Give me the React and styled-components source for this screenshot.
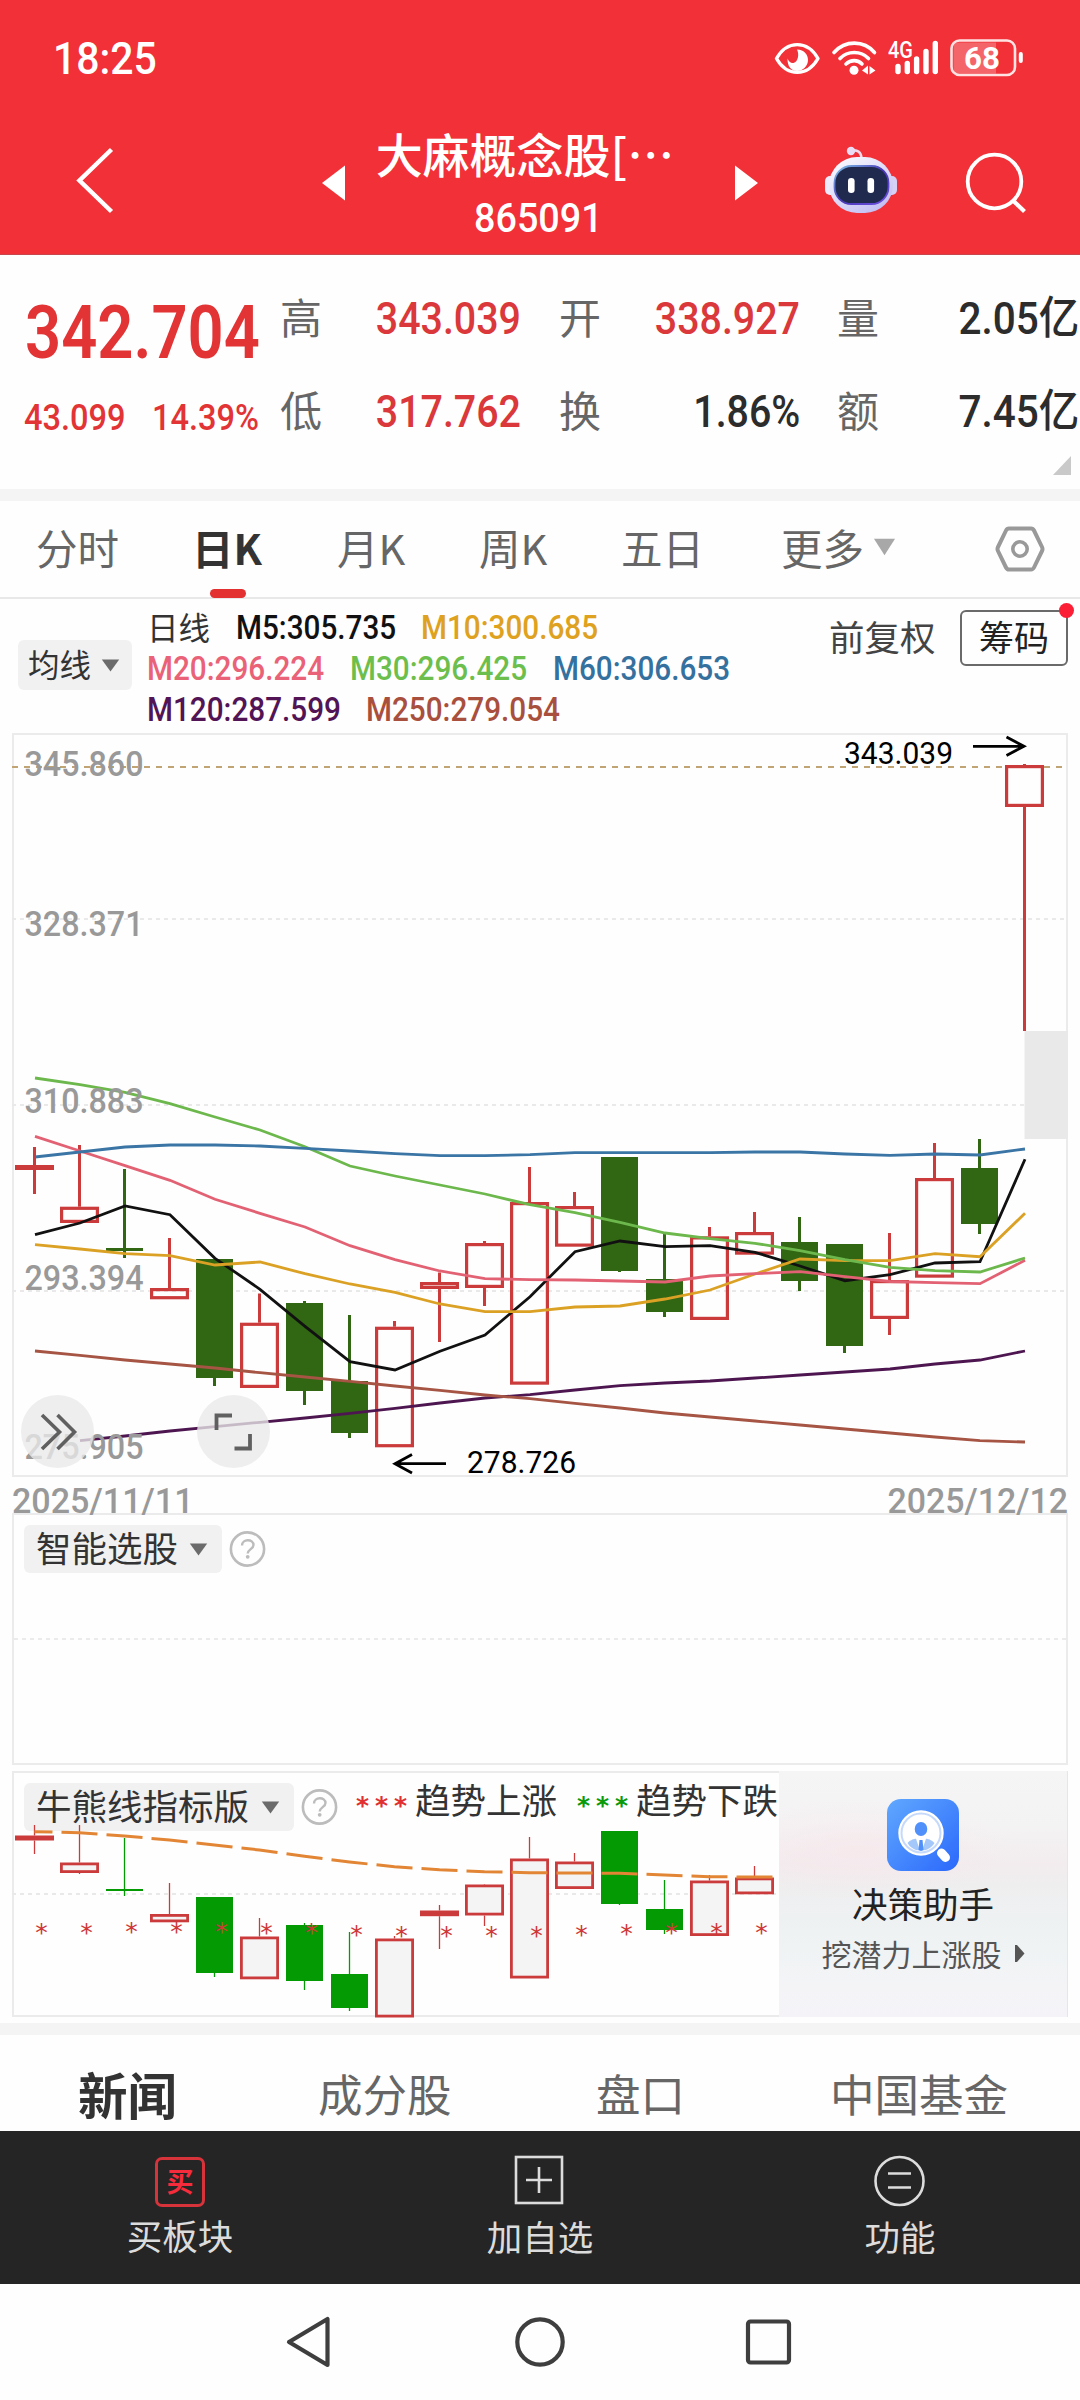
import React from "react";
import styled, { createGlobalStyle } from "styled-components";

const GlobalStyle = createGlobalStyle`
	* {
		box-sizing: border-box;
	}
	body {
		margin: 0;
		background: #fefefe;
		font-family: "Noto Sans CJK SC", sans-serif;
	}
	svg {
		display: block;
		flex: none;
		overflow: visible;
	}
`;

const Page = styled.div`
	width: 1080px;
	height: 2400px;
	display: flex;
	flex-direction: column;
	overflow: hidden;
	background: #fefefe;
`;

/* fixed width box, the digits inside are squeezed a little */
const NumBox = styled.span`
	display: inline-flex;
	justify-content: ${(p) => (p.$end ? "flex-end" : "flex-start")};
	flex: none;
	width: ${(p) => p.$w}px;
	font-family: Roboto, "Noto Sans CJK SC", sans-serif;
	font-size: ${(p) => p.$size}px;
	font-weight: ${(p) => p.$weight || 500};
	line-height: 1;
	color: ${(p) => p.$color || "inherit"};
	white-space: nowrap;
`;
const NumText = styled.span`
	transform: scaleX(${(p) => p.$k});
	transform-origin: ${(p) => (p.$end ? "right" : "left")} center;
`;

function Num({ w, size, k = 0.9, color, weight, end, children }) {
	return (
		<NumBox $w={w} $size={size} $color={color} $weight={weight} $end={end}>
			<NumText $k={k} $end={end}>
				{children}
			</NumText>
		</NumBox>
	);
}

/* ---------- header ---------- */
const Header = styled.header`
	height: 255px;
	background: #f13037;
	color: white;
	border-bottom: 1px solid #c9474c;
`;
const StatusBar = styled.div`
	height: 112px;
	padding: 4px 56px 0 53px;
	display: flex;
	align-items: center;
	justify-content: space-between;
`;
const TitleBar = styled.div`
	height: 142px;
	display: grid;
	grid-template-columns: 322px 436px 322px;
`;
const TitleSide = styled.div`
	display: flex;
	align-items: flex-start;
	padding-left: ${(p) => p.$left}px;
`;
const TitleCenter = styled.div`
	display: flex;
	justify-content: space-between;
	align-items: flex-start;
`;
const TitleText = styled.div`
	display: flex;
	flex-direction: column;
	align-items: center;
	padding-top: 16px;
	padding-right: 3px;
`;
const StockName = styled.div`
	font-size: 47px;
	line-height: 50px;
	font-weight: 500;
	margin: 0 27px 20px 0;
	white-space: nowrap;
`;

/* ---------- quote ---------- */
const Quote = styled.section`
	height: 234px;
	position: relative;
	display: grid;
	grid-template-columns: 280px 279px 278px 243px;
`;
const PriceBlock = styled.div`
	padding: 41px 0 0 25px;
	color: #e23335;
`;
const ChangeRow = styled.div`
	display: flex;
	gap: 27px;
	margin: 29px 0 0 -1px;
`;
const QuoteCol = styled.div`
	display: flex;
	flex-direction: column;
	gap: 33px;
	padding-top: 33px;
`;
const QuoteCell = styled.div`
	height: 60px;
	display: flex;
	align-items: center;
	justify-content: space-between;
	padding-right: ${(p) => p.$right}px;
`;
const QuoteLabel = styled.span`
	font-size: 42px;
	line-height: 56px;
	padding-bottom: 5px;
	color: #666;
`;
const Corner = styled.svg`
	position: absolute;
	right: 9px;
	bottom: 14px;
`;
const Band = styled.div`
	height: 12px;
	flex: none;
	background: #f4f4f4;
`;

/* ---------- period tabs ---------- */
const Tabs = styled.nav`
	height: 98px;
	flex: none;
	position: relative;
	display: flex;
	border-bottom: 2px solid #e8e8e8;
	padding-left: 36px;
`;
const Tab = styled.div`
	width: ${(p) => p.$w}px;
	position: relative;
	font-size: 41.5px;
	line-height: 92px;
	padding-bottom: 4px;
	white-space: nowrap;
	color: ${(p) => (p.$active ? "#333" : "#666")};
	font-weight: ${(p) => (p.$active ? 700 : 400)};

	display: flex;
	align-items: center;
	gap: 9px;
`;
const Indicator = styled.span`
	position: absolute;
	left: 18px;
	bottom: -1px;
	width: 36px;
	height: 9px;
	border-radius: 5px;
	background: #e33030;
`;

/* ---------- legend ---------- */
const Legend = styled.div`
	height: 134px;
	flex: none;
	display: flex;
	align-items: flex-start;
	padding: 0 12px 0 18px;
`;
const Chip = styled.div`
	height: ${(p) => p.$h}px;
	width: ${(p) => p.$w}px;
	flex: none;
	display: flex;
	align-items: center;
	justify-content: space-between;
	padding: 0 ${(p) => p.$pr}px 0 ${(p) => p.$pl}px;
	margin-top: ${(p) => p.$top || 0}px;
	border-radius: 6px;
	background: #f1f1f1;
	color: #333;
	font-size: ${(p) => p.$size}px;
	line-height: ${(p) => p.$h}px;
	white-space: nowrap;
`;
const ChipText = styled.span`
	padding-bottom: 4px;
`;
const MaRows = styled.div`
	width: 697px;
	padding: 8px 0 0 15px;
	display: flex;
	flex-direction: column;
`;
const MaRow = styled.div`
	height: 41px;
	display: flex;
	align-items: center;
	gap: 27px;
`;
const LineName = styled.span`
	width: 62px;
	font-size: 31.5px;
	line-height: 41px;
	padding-bottom: 3px;
	color: #333;
	white-space: nowrap;
`;
const Adjust = styled.div`
	margin-top: 14px;
	width: 131px;
	font-size: 35.5px;
	line-height: 46px;
	color: #444;
	white-space: nowrap;
`;
const ChipsButton = styled.div`
	position: relative;
	width: 108px;
	height: 56px;
	margin-top: 11px;
	border: 2px solid #6a6a6a;
	border-radius: 6px;
	font-size: 35px;
	line-height: 48px;
	text-align: center;
	color: #222;
`;
const RedDot = styled.i`
	position: absolute;
	right: -8px;
	top: -9px;
	width: 15px;
	height: 15px;
	border-radius: 50%;
	background: #fc1e35;
`;

/* ---------- charts ---------- */
const ChartWrap = styled.div`
	position: relative;
	height: 744px;
	flex: none;
`;
const RoundButton = styled.div`
	position: absolute;
	left: ${(p) => p.$left}px;
	top: 662px;
	width: 73px;
	height: 73px;
	border-radius: 50%;
	background: rgba(233, 233, 233, 0.78);
`;
const Dates = styled.div`
	height: 36px;
	flex: none;
	padding: 7px 12px 0 12px;
	display: flex;
	justify-content: space-between;
	color: #999;
`;
const SmartPanel = styled.div`
	height: 252px;
	flex: none;
	margin: 0 12px 6px;
	border: 2px solid #ebebeb;
	display: flex;
	flex-direction: column;
`;
const PanelHead = styled.div`
	height: ${(p) => p.$h}px;
	display: flex;
	align-items: flex-start;
	padding: 10px 0 0 10px;
	gap: 7px;
`;
const MidLine = styled.div`
	height: 2px;
	background: repeating-linear-gradient(90deg, #ebebeb 0 4px, transparent 4px 8px);
`;
const BullPanel = styled.div`
	height: 246px;
	flex: none;
	margin: 0 12px 6px;
	display: flex;
`;
const BullChart = styled.div`
	width: 767px;
	position: relative;
`;
const BullHead = styled.div`
	position: relative;
	display: flex;
	align-items: flex-start;
	padding: 12px 0 0 12px;
	height: 246px;
`;
const HelpSlot = styled.div`
	flex: none;
	padding: 0 18px 0 7px;
`;
const BullSvg = styled.svg`
	position: absolute;
	left: -12px;
	top: 0;
	z-index: 1;
`;
const TrendText = styled.span`
	width: ${(p) => p.$w}px;
	flex: none;
	font-size: 35.5px;
	line-height: 32px;
	color: #333;
	white-space: nowrap;
`;
const Stars = styled.span`
	width: 59px;
	flex: none;
	font-family: "DejaVu Sans", sans-serif;
	font-weight: bold;
	font-size: 25px;
	letter-spacing: 5.9px;
	line-height: 46px;
	white-space: nowrap;
	color: ${(p) => p.$color};
`;
const Helper = styled.div`
	width: 289px;
	display: flex;
	flex-direction: column;
	align-items: center;
	padding-top: 28px;
	border-right: 1px solid #e6e6e6;
	background:
		radial-gradient(ellipse 150px 50px at 78px 78px, rgba(248, 230, 234, 0.6), transparent),
		linear-gradient(#f5f5f6 0%, #f4f3f4 22%, #f2ecee 38%, #efeeef 46%, #eef1f2 60%, #eff3f4 72%, #f4f4f7 88%, #f5f3f7 100%);
`;
const HelperTitle = styled.div`
	margin-top: 10px;
	font-size: 35.5px;
	line-height: 44px;
	color: #222;
`;
const HelperSub = styled.div`
	margin-top: 9px;
	display: flex;
	align-items: center;
	gap: 12px;
	font-size: 30px;
	line-height: 38px;
	color: #555;
`;

/* ---------- bottom ---------- */
const NewsTabs = styled.div`
	height: 96px;
	flex: none;
	display: flex;
	padding: 7px 0 0 78px;
`;
const NewsTab = styled.div`
	width: ${(p) => p.$w}px;
	font-size: ${(p) => (p.$active ? 49.5 : 44.5)}px;
	font-weight: ${(p) => (p.$active ? 700 : 400)};
	line-height: ${(p) => (p.$active ? 103 : 101)}px;
	color: ${(p) => (p.$active ? "#333" : "#666")};
	white-space: nowrap;
`;
const ActionBar = styled.div`
	height: 153px;
	flex: none;
	display: grid;
	grid-template-columns: repeat(3, 1fr);
	background: #252525;
`;
const Action = styled.div`
	display: flex;
	flex-direction: column;
	align-items: center;
	padding-top: 24px;
	color: #dcdcdc;
`;
const ActionLabel = styled.div`
	font-size: 35.5px;
	line-height: 44px;
	margin-top: ${(p) => p.$top}px;
`;
const BuyIcon = styled.div`
	width: 50px;
	height: 50px;
	margin-top: 2px;
	border: 3px solid #d6333b;
	border-radius: 7px;
	color: #f62c3c;
	font-size: 27px;
	font-weight: 700;
	line-height: 42px;
	text-align: center;
`;
const SystemNav = styled.div`
	height: 116px;
	flex: none;
	display: flex;
	justify-content: center;
	align-items: center;
	gap: 177px;
`;

const X0 = 34.5;
const STEP = 45;
const RED = "#cb3b3b";
const GREEN = "#316613";

// [up, bodyTop, bodyBottom, wickTop, wickBottom]
const candles = [
	[1, 1165, 1170, 1147, 1194],
	[1, 1206.7, 1223, 1145, 1223],
	[0, 1248, 1251, 1169, 1258],
	[1, 1288, 1299.3, 1238, 1299],
	[0, 1259, 1378, 1259, 1386],
	[1, 1322.7, 1388, 1293.5, 1388],
	[0, 1303, 1391, 1301, 1405],
	[0, 1381, 1433, 1315, 1438],
	[1, 1326.7, 1447.3, 1321, 1447],
	[1, 1282, 1289, 1272.5, 1342],
	[1, 1243, 1288, 1241, 1306],
	[1, 1202, 1384.7, 1167, 1384],
	[1, 1206, 1246.7, 1192, 1246],
	[0, 1157, 1271, 1157, 1272],
	[0, 1279, 1312, 1233, 1317],
	[1, 1236.3, 1320, 1227, 1320],
	[1, 1232, 1254.7, 1212, 1254],
	[0, 1242, 1281, 1217, 1291],
	[0, 1244, 1346, 1244, 1353],
	[1, 1280, 1319, 1233, 1335],
	[1, 1178, 1277.7, 1143, 1277],
	[0, 1168, 1224, 1139, 1234],
	[1, 765, 807, 764, 1031],
];

const averages = [
	{
		color: "#111111",
		from: 0,
		ys: [1234.7, 1223, 1206, 1214.7, 1258.3, 1289.3, 1326.3, 1361.7, 1370, 1351.3, 1335, 1296.7, 1251.7, 1241, 1246.7, 1245.7, 1252.3, 1266, 1280.7, 1274.7, 1263, 1261.7, 1159.3],
	},
	{
		color: "#dba125",
		from: 0,
		ys: [1244.7, 1249, 1253.7, 1255.7, 1265, 1262, 1273.7, 1284, 1292.3, 1304, 1311.7, 1311.7, 1307, 1306, 1299, 1290, 1274, 1259, 1260.7, 1260.7, 1253.7, 1256.7, 1213.3],
	},
	{
		color: "#e26274",
		from: 0,
		ys: [1136.3, 1151, 1165.7, 1180.3, 1199.3, 1213.3, 1227, 1245.7, 1259.7, 1271, 1278.7, 1279.7, 1280, 1281, 1282, 1276, 1273.7, 1271.7, 1276.7, 1281.5, 1282.7, 1283.7, 1260.3],
	},
	{
		color: "#6cb84c",
		from: 0,
		ys: [1078, 1084.7, 1092.3, 1103.7, 1117, 1130, 1146.7, 1166, 1176, 1185, 1194, 1204.7, 1212.7, 1222.3, 1233, 1238.7, 1243.3, 1250.7, 1259.7, 1267.3, 1270.7, 1272, 1258],
	},
	{
		color: "#3a75a6",
		from: 0,
		ys: [1157, 1152, 1147, 1145, 1145, 1146, 1148.3, 1151, 1153.7, 1155.7, 1155.7, 1154.7, 1152.7, 1152.7, 1152.7, 1152.7, 1152, 1152, 1154, 1155.3, 1154, 1155, 1149],
	},
	{
		color: "#4d1650",
		from: 1,
		ys: [1440.7, 1436, 1431, 1426.7, 1422.3, 1418, 1413.3, 1408.3, 1403, 1398, 1394.7, 1390, 1385.7, 1383, 1381, 1378, 1375, 1372, 1369, 1364, 1360, 1351],
	},
	{
		color: "#a65443",
		from: 0,
		ys: [1351, 1355.3, 1360, 1364, 1368, 1372.7, 1377, 1381.3, 1386, 1390.3, 1395, 1398.7, 1403.3, 1408, 1413, 1417, 1421, 1425, 1429, 1433, 1437, 1440.7, 1442],
	},
];

const priceLabels = [
	["345.860", 775.5],
	["328.371", 935.5],
	["310.883", 1112.5],
	["293.394", 1290],
	["275.905", 1458.5],
];

function Candle({ i, data, green, fill, wick, line }) {
	const [up, top, bottom, hi, lo] = data;
	const x = X0 + i * STEP;
	if (!up) {
		return (
			<g fill={green}>
				<rect x={x - wick / 2} y={hi} width={wick} height={lo - hi} />
				<rect x={x - 18.5} y={top} width={37} height={bottom - top} />
			</g>
		);
	}
	return (
		<g>
			<rect x={x - wick / 2} y={hi} width={wick} height={Math.max(0, top - hi)} fill={RED} />
			<rect x={x - wick / 2} y={bottom} width={wick} height={Math.max(0, lo - bottom)} fill={RED} />
			<rect
				x={x - 19.5 + line / 2}
				y={top + line / 2}
				width={39 - line}
				height={Math.max(0.1, bottom - top - line)}
				fill={bottom - top < 6 ? RED : fill}
				stroke={RED}
				strokeWidth={line}
			/>
		</g>
	);
}

function KLineChart() {
	return (
		<svg width="1080" height="744" viewBox="0 733 1080 744">
			<rect x="13" y="734" width="1054" height="742" fill="none" stroke="#ebebeb" strokeWidth="2" />
			{[919, 1105, 1291].map((y) => (
				<path key={y} d={`M12 ${y}H1066`} stroke="#e9e9e9" strokeWidth="2" strokeDasharray="4 4" />
			))}
			<path d="M12 767H1066" stroke="#c1a473" strokeWidth="2" strokeDasharray="6 6" />
			<rect x="1024.5" y="1031" width="43.5" height="108" fill="#e9e9e9" />
			{candles.map((c, i) => (
				<Candle key={i} i={i} data={c} green={GREEN} fill="none" wick={3} line={3.2} />
			))}
			{averages.map((line) => (
				<polyline
					key={line.color}
					points={line.ys.map((y, i) => `${X0 + 0.5 + (i + line.from) * STEP},${y}`).join(" ")}
					fill="none"
					stroke={line.color}
					strokeWidth="2.8"
				/>
			))}
			<g fontFamily="Roboto, sans-serif" fontSize="35.5" fill="#999" fontWeight="500">
				{priceLabels.map(([text, y]) => (
					<text key={text} x="24.500" y={y} textLength="119" lengthAdjust="spacingAndGlyphs">
						{text}
					</text>
				))}
			</g>
			<g fontFamily="Roboto, sans-serif" fontSize="31" fill="#000">
				<text x="844" y="764" textLength="109" lengthAdjust="spacingAndGlyphs">
					343.039
				</text>
				<text x="467" y="1472.5" textLength="109" lengthAdjust="spacingAndGlyphs">
					278.726
				</text>
			</g>
			<g fill="none" stroke="#000" strokeWidth="2.8">
				<path d="M973 746.3H1024M1006.5 737L1024 746.3L1006.5 755.5" />
				<path d="M446 1463.7H395M412 1454.5L395 1463.7L412 1473" />
			</g>
		</svg>
	);
}

const bullCandles = [
	[1, 1835.5, 1840.5, 1825, 1854],
	[1, 1862.5, 1873, 1825, 1874],
	[0, 1889, 1891, 1838, 1896],
	[1, 1914, 1922.3, 1883, 1922],
	[0, 1897, 1973, 1897, 1977],
	[1, 1936.5, 1979.3, 1918, 1979],
	[0, 1925, 1981, 1923, 1990],
	[0, 1974, 2008, 1932, 2011],
	[1, 1938.5, 2017.5, 1936, 2017],
	[1, 1910.5, 1916.2, 1905, 1949],
	[1, 1884.5, 1915.5, 1884, 1926],
	[1, 1858.5, 1978.5, 1837, 1978],
	[1, 1861.5, 1889, 1853, 1889],
	[0, 1831, 1904, 1831, 1905],
	[0, 1909, 1930, 1880, 1934],
	[1, 1880.5, 1936, 1875, 1935],
	[1, 1877.5, 1894.3, 1866, 1894],
];
const bullLine = [1831.7, 1832.7, 1836, 1840, 1845, 1850, 1856.3, 1862, 1866.7, 1869.7, 1871.7, 1872.7, 1873, 1873.3, 1875, 1876.7, 1877];
const starYs = [1928.3, 1927.7, 1926.5, 1926.7, 1926.7, 1927.5, 1928.3, 1929.5, 1930.5, 1930.7, 1930.7, 1930.7, 1929.5, 1928.5, 1928.3, 1928.3, 1927.5];

function BullLineChart() {
	const at = (i, dir) => {
		const next = bullLine[i + dir] ?? bullLine[i];
		return bullLine[i] + (next - bullLine[i]) * 0.4;
	};
	return (
		<BullSvg width="791" height="247" viewBox="0 1771 791 247">
			<path d="M779 1772H13V2016H779" fill="none" stroke="#ebebeb" strokeWidth="2" />
			<path d="M12 1894H779" stroke="#e9e9e9" strokeWidth="2" strokeDasharray="4 4" />
			{bullCandles.map((c, i) => (
				<Candle key={i} i={i} data={c} green="#049a04" fill="#f4f4f4" wick={1.3} line={2.8} />
			))}
			{bullLine.map((y, i) => {
				const x = X0 + i * STEP;
				return (
					<path
						key={i}
						d={`M${i ? x - 18 : x} ${i ? at(i, -1) : y}L${x} ${y}L${x + 18} ${at(i, 1)}`}
						fill="none"
						stroke="#e28635"
						strokeWidth="3"
					/>
				);
			})}
			<g fontFamily="DejaVu Sans, sans-serif" fontSize="25" fill="#cf3636" textAnchor="middle">
				{starYs.map((y, i) => (
					<text key={i} x={41.5 + i * STEP} y={y + 13}>
						*
					</text>
				))}
			</g>
		</BullSvg>
	);
}

function Caret({ w = 19, h = 13, color = "#6b6b6b" }) {
	return (
		<svg width={w} height={h} viewBox="0 0 19 13" preserveAspectRatio="none">
			<path d="M0.8 0.5H18.2L9.5 12.5Z" fill={color} />
		</svg>
	);
}

function Help() {
	return (
		<svg width="37" height="48" viewBox="0 0 37 48">
			<circle cx="18.5" cy="24" r="16.6" fill="none" stroke="#bcbcbc" strokeWidth="2.6" />
			<path d="M13 20.5C13 13.5 24.5 13.5 24.5 20C24.5 24 18.7 24.3 18.7 28.6" fill="none" stroke="#bcbcbc" strokeWidth="2.4" />
			<circle cx="18.7" cy="31.8" r="1.9" fill="#bcbcbc" />
		</svg>
	);
}

function StatusIcons() {
	return (
		<svg width="250" height="40" viewBox="775 37 250 40" fill="none" stroke="white">
			<path d="M777.5 57.5C788 39 808.5 39 819 57.5C808.5 76 788 76 777.5 57.5Z" strokeWidth="3.4" strokeLinejoin="round" />
			<path d="M798 48.5C805.5 48.5 809 54 809 59C809 65 804 70 798 70C792 70 788.2 65 788.5 57.5C789.5 60.5 792 62.5 794.5 62C799 61 800.5 53.5 798 48.5Z" fill="white" stroke="none" />
			<path d="M835 51.5C846 39 865 39 875.5 51.5" strokeWidth="3.6" strokeLinecap="round" />
			<path d="M841 57.5C848.5 49.5 862 49.5 869.5 57.5" strokeWidth="3.6" strokeLinecap="round" />
			<path d="M847 63C851.5 58.5 859 58.5 863 63" strokeWidth="3.6" strokeLinecap="round" />
			<circle cx="855" cy="69.3" r="4.5" fill="white" stroke="none" />
			<path d="M863 69.5L869 64.5V73.5ZM876.5 69.5L870.5 65V73.5Z" fill="white" stroke="none" />
			<path d="M899 65.5V70.5M908.3 62.5V70.5M917.6 58V70.5M927 50.5V70.5M936.3 42.5V70.5" strokeWidth="5.4" strokeLinecap="round" />
			<rect x="952.5" y="39.5" width="63.5" height="34.5" rx="8" strokeWidth="2.6" stroke="#ffe3e3" />
			<path d="M959 41.5H997V72.5H959Q954.5 72.5 954.5 67V47Q954.5 41.5 959 41.5Z" fill="rgba(255,255,255,.26)" stroke="none" />
			<path d="M1021.8 53V60" strokeWidth="4" strokeLinecap="round" />
			<g fill="white" stroke="none" fontFamily="Roboto, sans-serif">
				<text x="889" y="56.5" fontSize="23" fontWeight="500" textLength="25" lengthAdjust="spacingAndGlyphs">
					4G
				</text>
				<text x="965" y="68" fontSize="32" fontWeight="700" textLength="36" lengthAdjust="spacingAndGlyphs">
					68
				</text>
			</g>
		</svg>
	);
}

function RobotAndSearch() {
	return (
		<svg width="210" height="142" viewBox="820 112 210 142">
			<defs>
				<linearGradient id="shell" x1="0" y1="0" x2="0.7" y2="1">
					<stop offset="0" stopColor="#ffffff" />
					<stop offset="1" stopColor="#c3bff3" />
				</linearGradient>
				<linearGradient id="rim" x1="0" y1="0" x2="1" y2="1">
					<stop offset="0" stopColor="#7fc6e8" />
					<stop offset="0.5" stopColor="#4a35b8" />
					<stop offset="1" stopColor="#6d50e0" />
				</linearGradient>
			</defs>
			<path d="M851 151C857 149 861.5 152 861.5 159" fill="none" stroke="#f3d9ea" strokeWidth="2.6" />
			<circle cx="851" cy="151" r="4.2" fill="#eadcf5" />
			<rect x="825" y="176" width="12" height="19" rx="5" fill="#eceafc" />
			<rect x="885" y="176" width="12" height="19" rx="5" fill="#d5d0f6" />
			<rect x="829" y="157" width="64" height="56" rx="28" fill="url(#shell)" />
			<rect x="834.5" y="166" width="54" height="38" rx="17" fill="#202a4e" stroke="url(#rim)" strokeWidth="1.8" />
			<rect x="848" y="178" width="6.6" height="15" rx="3.2" fill="white" />
			<rect x="867.5" y="178" width="6.6" height="15" rx="3.2" fill="white" />
			<circle cx="994.5" cy="181.5" r="26.8" fill="none" stroke="white" strokeWidth="3.8" />
			<path d="M1013 200.5L1024.5 211.5" stroke="white" strokeWidth="4.2" />
		</svg>
	);
}

const columns = [
	{
		right: 38,
		cells: [
			["高", "343.039", "#da383a", 145],
			["低", "317.762", "#da383a", 145],
		],
	},
	{
		right: 37,
		cells: [
			["开", "338.927", "#da383a", 145],
			["换", "1.86%", "#2c2c2c", 107],
		],
	},
	{
		right: 1,
		cells: [
			["量", "2.05亿", "#2c2c2c", 122],
			["额", "7.45亿", "#2c2c2c", 122],
		],
	},
];

function App() {
	return (
		<Page>
			<GlobalStyle />
			<Header>
				<StatusBar>
					<Num w={105} size={45} k={0.91}>
						18:25
					</Num>
					<StatusIcons />
				</StatusBar>
				<TitleBar>
					<TitleSide $left={70}>
						<svg width="50" height="142" viewBox="70 112 50 142">
							<path d="M111.5 149.5L79.5 180.5L111.5 211.5" fill="none" stroke="white" strokeWidth="4.5" />
						</svg>
					</TitleSide>
					<TitleCenter>
						<svg width="23" height="142" viewBox="0 0 23 142">
							<path d="M23 53.5V88.5L0 71Z" fill="white" />
						</svg>
						<TitleText>
							<StockName>大麻概念股[…</StockName>
							<Num w={128} size={41} k={0.92}>
								865091
							</Num>
						</TitleText>
						<svg width="23" height="142" viewBox="0 0 23 142">
							<path d="M0 53.5V88.5L23 71Z" fill="white" />
						</svg>
					</TitleCenter>
					<TitleSide $left={62}>
						<RobotAndSearch />
					</TitleSide>
				</TitleBar>
			</Header>

			<Quote>
				<PriceBlock>
					<Num w={236} size={74} k={0.855} weight={600}>
						342.704
					</Num>
					<ChangeRow>
						<Num w={101} size={37} k={0.88}>
							43.099
						</Num>
						<Num w={108} size={37} k={0.88}>
							14.39%
						</Num>
					</ChangeRow>
				</PriceBlock>
				{columns.map((col) => (
					<QuoteCol key={col.cells[0][0]}>
						{col.cells.map(([label, value, color, w]) => (
							<QuoteCell key={label} $right={col.right}>
								<QuoteLabel>{label}</QuoteLabel>
								<Num w={w} size={45} k={col.right > 1 ? 0.875 : 0.9} color={color} end>
									{value}
								</Num>
							</QuoteCell>
						))}
					</QuoteCol>
				))}
				<Corner width="18" height="19" viewBox="0 0 18 19">
					<path d="M18 0V19H0Z" fill="#c9c9c9" />
				</Corner>
			</Quote>
			<Band />

			<Tabs>
				<Tab $w={156}>分时</Tab>
				<Tab $w={145} $active>
					日K
					<Indicator />
				</Tab>
				<Tab $w={142}>月K</Tab>
				<Tab $w={142}>周K</Tab>
				<Tab $w={160}>五日</Tab>
				<Tab $w={214}>
					更多
					<Caret w={23} h={18} color="#a8a8a8" />
				</Tab>
				<svg width="50" height="96" viewBox="0 0 50 96">
					<path d="M14 27.5H36Q38 27.5 39 29.5L47 46Q48 48 47 50L39 66.5Q38 68.5 36 68.5H14Q12 68.5 11 66.5L3 50Q2 48 3 46L11 29.5Q12 27.5 14 27.5Z" fill="none" stroke="#999" strokeWidth="4" />
					<circle cx="25" cy="48" r="7.2" fill="none" stroke="#999" strokeWidth="3.6" />
				</svg>
			</Tabs>

			<Legend>
				<Chip $w={114} $h={50} $size={31.5} $pl={10} $pr={12} $top={41}>
					<ChipText>均线</ChipText>
					<Caret />
				</Chip>
				<MaRows>
					<MaRow>
						<LineName>日线</LineName>
						<Num w={158} size={33} color="#111">
							M5:305.735
						</Num>
						<Num w={178} size={33} color="#dfa120">
							M10:300.685
						</Num>
					</MaRow>
					<MaRow>
						<Num w={176} size={33} color="#ea6277">
							M20:296.224
						</Num>
						<Num w={176} size={33} color="#6cbf4c">
							M30:296.425
						</Num>
						<Num w={178} size={33} color="#35719f">
							M60:306.653
						</Num>
					</MaRow>
					<MaRow>
						<Num w={192} size={33} color="#521455">
							M120:287.599
						</Num>
						<Num w={194} size={33} color="#a94f3d">
							M250:279.054
						</Num>
					</MaRow>
				</MaRows>
				<Adjust>前复权</Adjust>
				<ChipsButton>
					筹码
					<RedDot />
				</ChipsButton>
			</Legend>

			<ChartWrap>
				<KLineChart />
				<RoundButton $left={21}>
					<svg width="73" height="73" viewBox="0 0 73 73" fill="none" stroke="#606060" strokeWidth="3.6">
						<path d="M21 20L38.5 37L21 54M36.5 20L53.5 37L36.5 54" />
					</svg>
				</RoundButton>
				<RoundButton $left={197}>
					<svg width="73" height="73" viewBox="0 0 73 73" fill="none" stroke="#606060" strokeWidth="3.8">
						<path d="M35 20.5H19.5V35M37.5 53.5H53V39" />
					</svg>
				</RoundButton>
			</ChartWrap>

			<Dates>
				<Num w={185} size={35.5} k={0.96} weight={500}>
					2025/11/11
				</Num>
				<Num w={185} size={35.5} k={0.955} weight={500} end>
					2025/12/12
				</Num>
			</Dates>

			<SmartPanel>
				<PanelHead $h={123}>
					<Chip $w={198} $h={48} $size={35.5} $pl={12} $pr={14}>
						<ChipText>智能选股</ChipText>
						<Caret />
					</Chip>
					<Help />
				</PanelHead>
				<MidLine />
			</SmartPanel>

			<BullPanel>
				<BullChart>
					<BullHead>
						<Chip $w={270} $h={48} $size={35.5} $pl={12} $pr={14}>
							<ChipText>牛熊线指标版</ChipText>
							<Caret />
						</Chip>
						<HelpSlot>
							<Help />
						</HelpSlot>
						<Stars $color="#e03030">***</Stars>
						<TrendText $w={162}>趋势上涨</TrendText>
						<Stars $color="#0a9a0a">***</Stars>
						<TrendText $w={142}>趋势下跌</TrendText>
					</BullHead>
					<BullLineChart />
				</BullChart>
				<Helper>
					<svg width="72" height="72" viewBox="0 0 72 72">
						<defs>
							<linearGradient id="tile" x1="0" y1="0" x2="1" y2="1">
								<stop offset="0" stopColor="#60a8ff" />
								<stop offset="1" stopColor="#2b68fb" />
							</linearGradient>
						</defs>
						<rect width="72" height="72" rx="14" fill="url(#tile)" />
						<circle cx="34" cy="34" r="20" fill="white" stroke="#c5d9fb" strokeWidth="3" />
						<circle cx="34" cy="34" r="21.6" fill="none" stroke="white" strokeWidth="2.2" />
						<ellipse cx="34" cy="30" rx="6.3" ry="7" fill="#4f90fb" />
						<path d="M20.5 44C24 40.5 27 40 29 39.8L33 51.5C27.5 51.3 23 48.5 20.5 44ZM47.5 44C44 40.5 41 40 39 39.8L35 51.5C40.5 51.3 45 48.5 47.5 44Z" fill="#a5c8fa" />
						<path d="M32.5 41H35.5L36.5 51L34 52L31.5 51Z" fill="#4f90fb" />
						<path d="M54.5 54L58.5 58.5" stroke="white" strokeWidth="9" strokeLinecap="round" />
					</svg>
					<HelperTitle>决策助手</HelperTitle>
					<HelperSub>
						挖潜力上涨股
						<svg width="11" height="20" viewBox="0 0 11 20">
							<path d="M1 2H3L10.5 10.5L3 19H1Z" fill="#555" />
						</svg>
					</HelperSub>
				</Helper>
			</BullPanel>
			<Band />

			<NewsTabs>
				<NewsTab $w={240} $active>
					新闻
				</NewsTab>
				<NewsTab $w={278}>成分股</NewsTab>
				<NewsTab $w={234}>盘口</NewsTab>
				<NewsTab $w={180}>中国基金</NewsTab>
			</NewsTabs>

			<ActionBar>
				<Action>
					<BuyIcon>买</BuyIcon>
					<ActionLabel $top={6}>买板块</ActionLabel>
				</Action>
				<Action>
					<svg width="52" height="52" viewBox="0 0 52 52" fill="none" stroke="#dcdcdc" strokeWidth="2.6">
						<rect x="2" y="2" width="46" height="46" />
						<path d="M12 25H38M25 12V38" />
					</svg>
					<ActionLabel $top={7}>加自选</ActionLabel>
				</Action>
				<Action>
					<svg width="52" height="52" viewBox="0 0 52 52" fill="none" stroke="#dcdcdc" strokeWidth="2.6">
						<circle cx="25.5" cy="26" r="24" />
						<path d="M14 18.5H37M14 32.5H37" />
					</svg>
					<ActionLabel $top={7}>功能</ActionLabel>
				</Action>
			</ActionBar>

			<SystemNav>
				<svg width="52" height="56" viewBox="0 0 52 56" fill="none" stroke="#3e3e3e" strokeWidth="4.2" strokeLinejoin="round">
					<path d="M42.5 5V51L4 28Z" />
				</svg>
				<svg width="52" height="56" viewBox="0 0 52 56" fill="none" stroke="#3e3e3e" strokeWidth="4.2">
					<circle cx="26" cy="28" r="22.7" />
				</svg>
				<svg width="52" height="56" viewBox="0 0 52 56" fill="none" stroke="#3e3e3e" strokeWidth="4.2">
					<rect x="5" y="7.5" width="41" height="41" rx="2.5" />
				</svg>
			</SystemNav>
		</Page>
	);
}

export default App;
